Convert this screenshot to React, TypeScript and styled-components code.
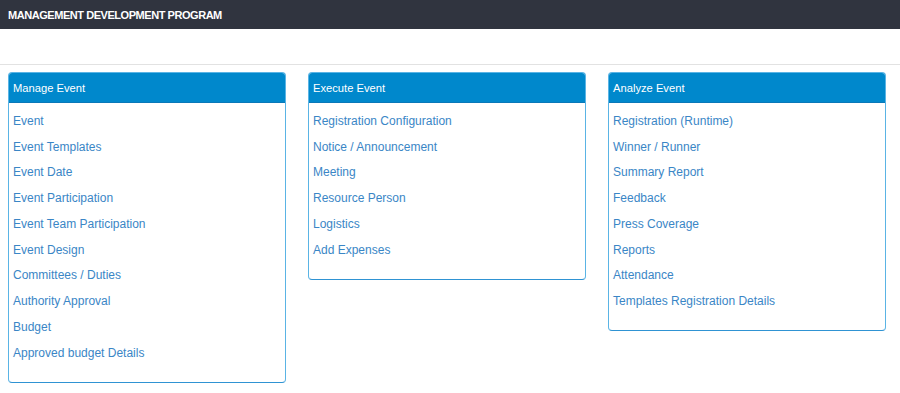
import React from "react";
import styled, { createGlobalStyle } from "styled-components";

const Global = createGlobalStyle`
  html, body { margin: 0; padding: 0; background: #fff; }
  body { font-family: Tahoma, "DejaVu Sans", "Liberation Sans", sans-serif; }
`;

const TopBar = styled.header`
  height: 29px;
  background: #30343f;
  display: flex;
  align-items: center;
  padding: 0 8px;
  font-family: "Liberation Sans", Arial, sans-serif;
  font-weight: bold;
  font-size: 11px;
  color: #fff;
  letter-spacing: -0.45px;
`;

const SubBar = styled.div`
  height: 35px;
  border-bottom: 1px solid #e2e2e2;
`;

const Columns = styled.main`
  display: flex;
  align-items: flex-start;
  gap: 22px;
  padding: 7px 8px 0 8px;
`;

const Panel = styled.section`
  width: 278px;
  box-sizing: border-box;
  border: 1px solid #5ab4e5;
  border-bottom-color: #2f93d3;
  border-radius: 4px;
  overflow: hidden;
  background: #fff;
`;

const PanelHeader = styled.div`
  height: 29px;
  background: #0088cc;
  display: flex;
  align-items: center;
  padding: 0 4px;
  color: #fff;
  font-family: "Liberation Sans", Arial, sans-serif;
  font-size: 11.2px;
  border-bottom: 1px solid #0a78b8;
`;

const List = styled.ul`
  list-style: none;
  margin: 0;
  padding: 5px 4px 16px 4px;
`;

const Item = styled.li`
  height: 25.75px;
  display: flex;
  align-items: center;
  font-family: "Liberation Sans", Arial, sans-serif;
  font-size: 12px;
  color: #3a86c6;
  cursor: pointer;
`;

const panels = [
  {
    title: "Manage Event",
    items: [
      "Event",
      "Event Templates",
      "Event Date",
      "Event Participation",
      "Event Team Participation",
      "Event Design",
      "Committees / Duties",
      "Authority Approval",
      "Budget",
      "Approved budget Details",
    ],
  },
  {
    title: "Execute Event",
    items: [
      "Registration Configuration",
      "Notice / Announcement",
      "Meeting",
      "Resource Person",
      "Logistics",
      "Add Expenses",
    ],
  },
  {
    title: "Analyze Event",
    items: [
      "Registration (Runtime)",
      "Winner / Runner",
      "Summary Report",
      "Feedback",
      "Press Coverage",
      "Reports",
      "Attendance",
      "Templates Registration Details",
    ],
  },
];

export default function App() {
  return (
    <>
      <Global />
      <TopBar>MANAGEMENT DEVELOPMENT PROGRAM</TopBar>
      <SubBar />
      <Columns>
        {panels.map((p) => (
          <Panel key={p.title}>
            <PanelHeader>{p.title}</PanelHeader>
            <List>
              {p.items.map((it) => (
                <Item key={it}>{it}</Item>
              ))}
            </List>
          </Panel>
        ))}
      </Columns>
    </>
  );
}
